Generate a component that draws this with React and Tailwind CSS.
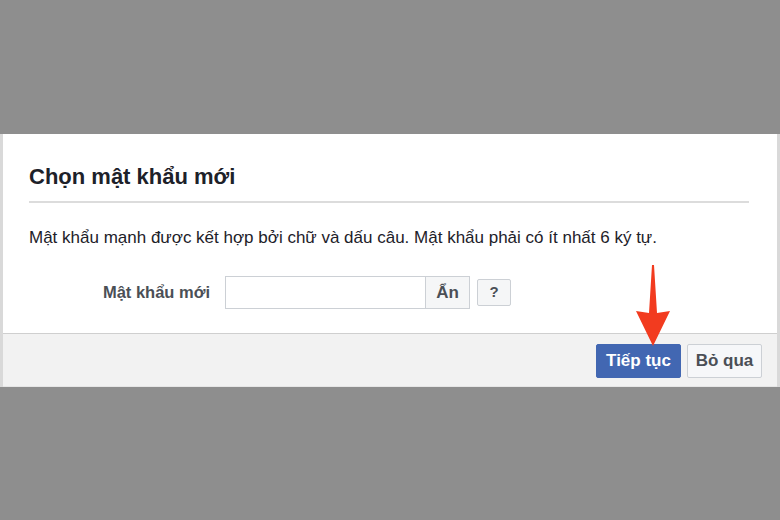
export default function App() {
  return (
    <div
      className="w-[780px] h-[520px] bg-[#8e8e8e] pt-[134px] overflow-hidden"
      style={{ fontFamily: '"Liberation Sans", Arial, sans-serif' }}
    >
      <div className="relative bg-white border-x-[3px] border-[#d9d9d9]">
        <div className="pl-[26px] pr-[28px] pt-[29px]">
          <h1 className="text-[22px] leading-[28px] font-bold text-[#1d2129]">
            Chọn mật khẩu mới
          </h1>
          <div className="mt-[10px] h-[2px] bg-[#dcdcdc]" />
          <p className="mt-[25px] text-[17px] leading-[20px] text-[#1d2129] whitespace-nowrap">
            Mật khẩu mạnh được kết hợp bởi chữ và dấu câu. Mật khẩu phải có ít
            nhất 6 ký tự.
          </p>
        </div>

        <div className="flex items-center mt-[28px] pb-[24px]">
          <label className="w-[207px] text-right text-[16.5px] font-bold text-[#4b4f56]">
            Mật khẩu mới
          </label>
          <div className="ml-[15px] flex h-[33px]">
            <input
              type="password"
              className="w-[201px] h-full border border-[#ccd0d5] bg-white outline-none px-2 text-[15px]"
            />
            <button className="w-[44px] h-full border border-l-0 border-[#ccd0d5] bg-[#f5f6f7] text-[17px] font-bold text-[#4b4f56]">
              Ẩn
            </button>
          </div>
          <button className="ml-[7px] w-[34px] h-[27px] rounded-[2px] border border-[#ccd0d5] bg-[#f5f6f7] text-[15px] font-bold text-[#4b4f56]">
            ?
          </button>
        </div>

        <div className="flex justify-end items-center gap-[6px] h-[54px] pr-[15px] pt-[1px] bg-[#f2f2f2] border-t border-[#cfcfcf] border-b border-b-[#e6e6e6]">
          <button className="w-[85px] h-[34px] rounded-[2px] border border-[#4267b2] bg-[#4267b2] text-white text-[17px] font-bold">
            Tiếp tục
          </button>
          <button className="w-[75px] h-[34px] rounded-[2px] border border-[#ccd0d5] bg-[#f6f7f9] text-[#4b4f56] text-[17px] font-bold">
            Bỏ qua
          </button>
        </div>

        <svg
          className="absolute left-[630px] top-[131px]"
          width="40"
          height="82"
          viewBox="0 0 40 82"
        >
          <path
            d="M19 0 L21 0 L24 48 L37 46 L20 81 L3 46 L16 48 Z"
            fill="#f23b1f"
          />
        </svg>
      </div>
    </div>
  );
}
